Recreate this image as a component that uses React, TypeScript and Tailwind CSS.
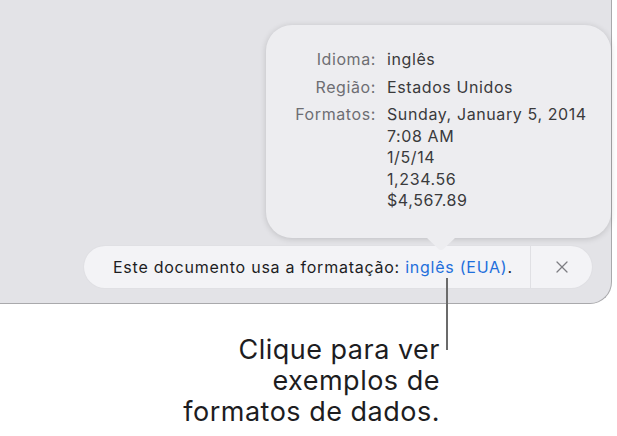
import { X } from "lucide-react";

const rows: { label: string; values: string[] }[] = [
  { label: "Idioma:", values: ["inglês"] },
  { label: "Região:", values: ["Estados Unidos"] },
  {
    label: "Formatos:",
    values: ["Sunday, January 5, 2014", "7:08 AM", "1/5/14", "1,234.56", "$4,567.89"],
  },
];

export default function App() {
  return (
    <div
      className="relative w-[617px] h-[436px] bg-white overflow-hidden"
      style={{ fontFamily: "Inter, 'Liberation Sans', sans-serif" }}
    >
      {/* window */}
      <div className="relative w-[612px] h-[304px] bg-[#e3e3e7] border-r border-b border-[#a9a9ac] rounded-br-[22px] pt-[246px] pl-[84px]">
        {/* notification bar */}
        <div className="flex items-center w-[508px] h-[42px] rounded-full bg-[#f3f3f6] shadow-[0_0_2px_rgba(0,0,0,0.06)]">
          <div className="flex-1 pl-[29px] text-[16px] text-[#1d1d1f] tracking-[0.75px]">
            Este documento usa a formatação: <span className="text-[#1f6fdc]">inglês (EUA)</span>.
          </div>
          <div className="w-px h-[42px] bg-[#e0e0e4]" />
          <div className="w-[61px] flex items-center justify-center">
            <X size={20} strokeWidth={1.5} className="text-[#7d7d82]" />
          </div>
        </div>

        {/* popover */}
        <div className="absolute left-[266px] top-[25px] w-[345px] h-[213px] rounded-[26px] bg-[#ededf0] shadow-[0_1px_6px_rgba(0,0,0,0.16)] pt-[24px]">
          <svg
            className="absolute left-[160px] -bottom-[13px]"
            width="30"
            height="14"
            viewBox="0 0 30 14"
          >
            <path d="M0 0 L12.5 12 Q15 14 17.5 12 L30 0 Z" fill="#ededf0" />
          </svg>
          <div className="grid grid-cols-[110px_1fr] gap-x-[11px] text-[16px] tracking-[0.6px]">
            {rows.map((r) => (
              <div key={r.label} className="contents">
                <div className="text-right text-[#6e6e73] leading-[21.5px] mb-[6px]">{r.label}</div>
                <div className="text-[#3a3a3c] leading-[21.5px] mb-[6px]">
                  {r.values.map((v) => (
                    <div key={v}>{v}</div>
                  ))}
                </div>
              </div>
            ))}
          </div>
        </div>
      </div>

      {/* callout */}
      <div className="absolute left-[446px] top-[278px] w-[2px] h-[72px] bg-[#6b6b6b]" />
      <div className="w-[440px] text-right text-[27px] leading-[31px] tracking-[0.5px] text-[#1d1d1f] pt-[30px]">
        <div>Clique para ver</div>
        <div>exemplos de</div>
        <div>formatos de dados.</div>
      </div>
    </div>
  );
}
